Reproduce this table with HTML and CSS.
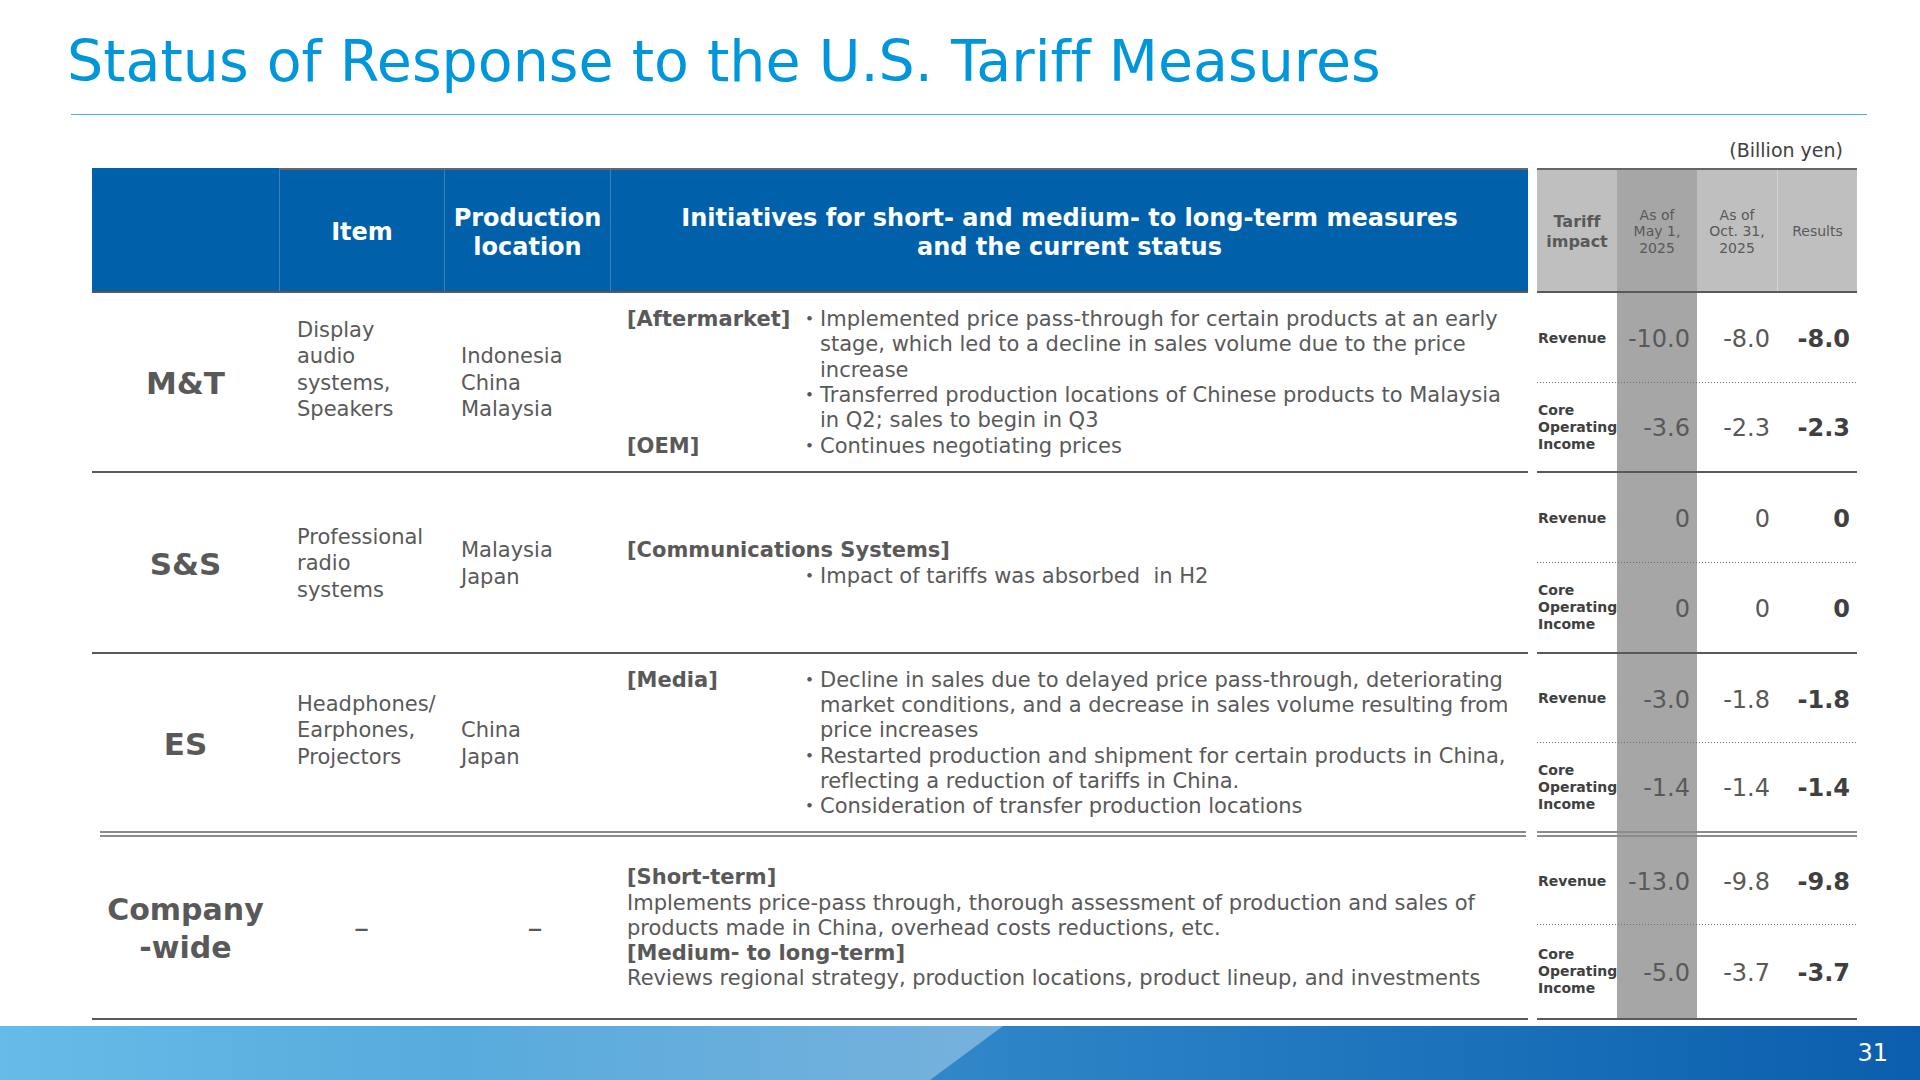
FILE: index.html
```html
<!DOCTYPE html>
<html lang="en">
<head>
<meta charset="utf-8">
<title>Status of Response to the U.S. Tariff Measures</title>
<link rel="stylesheet" href="styles.css">
</head>
<body>
<div class="slide">
  <h1 class="title">Status of Response to the U.S. Tariff Measures</h1>
  <div class="rule"></div>
  <div class="unit">(Billion yen)</div>

  <div class="tables">
    <div class="ltable">
      <div class="lrow lhead">
        <div class="c c-seg"></div>
        <div class="c c-item">Item</div>
        <div class="c c-loc">Production<br>location</div>
        <div class="c c-init">Initiatives for short- and medium- to long-term measures<br>and the current status</div>
      </div>

      <div class="lrow r-mt">
        <div class="c c-seg">M&amp;T</div>
        <div class="c c-item">Display<br>audio<br>systems,<br>Speakers<br>&nbsp;</div>
        <div class="c c-loc">Indonesia<br>China<br>Malaysia</div>
        <div class="c c-init">
          <div class="measures">
            <div class="lbl">[Aftermarket]</div>
            <div class="items">
              <div class="b"><span class="dot">・</span>Implemented price pass-through for certain products at an early<br>stage, which led to a decline in sales volume due to the price<br>increase</div>
              <div class="b"><span class="dot">・</span>Transferred production locations of Chinese products to Malaysia<br>in Q2; sales to begin in Q3</div>
            </div>
            <div class="lbl">[OEM]</div>
            <div class="items">
              <div class="b"><span class="dot">・</span>Continues negotiating prices</div>
            </div>
          </div>
        </div>
      </div>

      <div class="lrow r-ss">
        <div class="c c-seg">S&amp;S</div>
        <div class="c c-item">Professional<br>radio<br>systems</div>
        <div class="c c-loc">Malaysia<br>Japan</div>
        <div class="c c-init">
          <div class="measures">
            <div class="lbl span">[Communications Systems]</div>
            <div class="items col2">
              <div class="b"><span class="dot">・</span>Impact of tariffs was absorbed&nbsp; in H2</div>
            </div>
          </div>
        </div>
      </div>

      <div class="lrow r-es">
        <div class="c c-seg">ES</div>
        <div class="c c-item">Headphones/<br>Earphones,<br>Projectors<br>&nbsp;</div>
        <div class="c c-loc">China<br>Japan</div>
        <div class="c c-init">
          <div class="measures">
            <div class="lbl">[Media]</div>
            <div class="items">
              <div class="b"><span class="dot">・</span>Decline in sales due to delayed price pass-through, deteriorating<br>market conditions, and a decrease in sales volume resulting from<br>price increases</div>
              <div class="b"><span class="dot">・</span>Restarted production and shipment for certain products in China,<br>reflecting a reduction of tariffs in China.</div>
              <div class="b"><span class="dot">・</span>Consideration of transfer production locations</div>
            </div>
          </div>
        </div>
      </div>

      <div class="dbl dbl-left"></div>

      <div class="lrow r-cw">
        <div class="c c-seg">Company<br>-wide</div>
        <div class="c c-item c-dash">–</div>
        <div class="c c-loc c-dash">–</div>
        <div class="c c-init">
          <div class="plain">
            <div class="strong">[Short-term]</div>
            <div>Implements price-pass through, thorough assessment of production and sales of<br>products made in China, overhead costs reductions, etc.</div>
            <div class="strong">[Medium- to long-term]</div>
            <div>Reviews regional strategy, production locations, product lineup, and investments</div>
          </div>
        </div>
      </div>
    </div>

    <div class="rtable">
      <div class="rhead">
        <div class="h h-lab">Tariff<br>impact</div>
        <div class="h h-may">As of<br>May 1,<br>2025</div>
        <div class="h h-oct">As of<br>Oct. 31,<br>2025</div>
        <div class="h h-res">Results</div>
      </div>

      <div class="rgroup">
        <div class="rsub s-top h90">
          <div class="lab">Revenue</div><div class="v">-10.0</div><div class="v">-8.0</div><div class="v res">-8.0</div>
        </div>
        <div class="rsub s-bot h90">
          <div class="lab">Core<br>Operating<br>Income</div><div class="v">-3.6</div><div class="v">-2.3</div><div class="v res">-2.3</div>
        </div>
      </div>

      <div class="rgroup">
        <div class="rsub s-top h90">
          <div class="lab">Revenue</div><div class="v">0</div><div class="v">0</div><div class="v res">0</div>
        </div>
        <div class="rsub s-bot h91">
          <div class="lab">Core<br>Operating<br>Income</div><div class="v">0</div><div class="v">0</div><div class="v res">0</div>
        </div>
      </div>

      <div class="rgroup">
        <div class="rsub s-top h89">
          <div class="lab">Revenue</div><div class="v">-3.0</div><div class="v">-1.8</div><div class="v res">-1.8</div>
        </div>
        <div class="rsub h88">
          <div class="lab">Core<br>Operating<br>Income</div><div class="v">-1.4</div><div class="v">-1.4</div><div class="v res">-1.4</div>
        </div>
      </div>

      <div class="dbl dbl-right"></div>

      <div class="rgroup">
        <div class="rsub s-top h88">
          <div class="lab">Revenue</div><div class="v">-13.0</div><div class="v">-9.8</div><div class="v res">-9.8</div>
        </div>
        <div class="rsub s-bot h95">
          <div class="lab">Core<br>Operating<br>Income</div><div class="v">-5.0</div><div class="v">-3.7</div><div class="v res">-3.7</div>
        </div>
      </div>
    </div>
  </div>

  <footer class="footer"><span class="page">31</span></footer>
</div>
</body>
</html>
```

FILE: styles.css
```css
* { box-sizing: border-box; }
html, body { margin: 0; padding: 0; background: #fff; }
body {
  font-family: "DejaVu Sans", "Noto Sans CJK JP", sans-serif;
  font-variant-ligatures: none;
  color: #595959;
}
.slide {
  width: 1920px;
  height: 1080px;
  overflow: hidden;
  display: flex;
  flex-direction: column;
}

/* Title */
.title {
  margin: 0;
  padding: 27px 0 0 67px;
  height: 97px;
  font-size: 57px;
  line-height: 68px;
  font-weight: normal;
  color: #0096dc;
  white-space: nowrap;
}
.rule {
  margin: 17px 53px 0 71px;
  height: 1px;
  background: #45b0ea;
}
.unit {
  margin-top: 24px;
  padding-right: 77px;
  text-align: right;
  font-size: 19px;
  line-height: 22px;
  color: #404040;
}

/* Tables area */
.tables {
  margin-top: 7px;
  padding-left: 92px;
  display: flex;
  gap: 9px;
  height: 852px;
}

/* Left table */
.ltable { width: 1436px; display: flex; flex-direction: column; }
.lrow {
  display: grid;
  grid-template-columns: 187px 165px 166px 918px;
}
.lhead { height: 125px; border-bottom: 2px solid #595959; }
.r-mt { height: 180px; border-bottom: 2px solid #595959; }
.r-ss { height: 181px; border-bottom: 2px solid #595959; }
.r-es { height: 177px; }
.r-cw { height: 183px; border-bottom: 2px solid #595959; }

.c {
  display: flex;
  flex-direction: column;
  justify-content: center;
  font-size: 21px;
  line-height: 26.5px;
  white-space: nowrap;
}
.lrow:not(.lhead) .c { padding-top: 2px; }
.lhead .c {
  background: #0061aa;
  color: #fff;
  font-weight: bold;
  font-size: 24px;
  line-height: 29px;
  text-align: center;
  align-items: center;
  padding-top: 4px;
}
.lhead .c-item, .lhead .c-loc, .lhead .c-init {
  border-top: 2px solid #666;
  border-left: 1px solid #3f7fbd;
}
.c-seg {
  align-items: center;
  text-align: center;
  font-weight: bold;
  font-size: 31px;
  line-height: 38px;
}
.r-cw .c-seg { font-size: 30px; }
.lrow:not(.lhead) .c-item { padding-left: 18px; }
.lrow:not(.lhead) .c-loc { padding-left: 17px; }
.lrow:not(.lhead) .c-init { padding-left: 17px; }
.c-dash { align-items: center; font-size: 30px; }
.r-cw .c-item.c-dash { padding-left: 0; }
.r-cw .c-loc.c-dash { padding-left: 16px; }

.measures {
  display: grid;
  grid-template-columns: 172px 1fr;
  font-size: 21px;
  line-height: 25.3px;
}
.lbl { font-weight: bold; }
.lbl.span { grid-column: 1 / -1; }
.items.col2 { grid-column: 2; }
.b {
  padding-left: 21px;
  text-indent: -21px;
}
.dot {
  display: inline-block;
  width: 21px;
  text-indent: 0;
  text-align: center;
  font-family: "Noto Sans CJK JP", sans-serif;
  line-height: 1;
}
.plain {
  font-size: 21px;
  line-height: 25.3px;
}
.strong { font-weight: bold; }

.dbl {
  height: 6px;
  border-top: 2px solid #8c8c8c;
  border-bottom: 2px solid #8c8c8c;
}
.dbl-left { margin-left: 8px; margin-right: 2px; }

/* Right table */
.rtable {
  width: 320px;
  display: flex;
  flex-direction: column;
  background: linear-gradient(to right, transparent 80px, #a6a6a6 80px, #a6a6a6 160px, transparent 160px);
}
.rhead {
  height: 125px;
  display: grid;
  grid-template-columns: 80px 80px 80px 80px;
  border-top: 2px solid #666;
  border-bottom: 2px solid #595959;
}
.h {
  display: flex;
  flex-direction: column;
  justify-content: center;
  align-items: center;
  text-align: center;
  background: #bfbfbf;
  font-size: 14px;
  line-height: 16.5px;
  color: #595959;
  white-space: nowrap;
  padding-top: 2px;
}
.h-lab { font-weight: bold; font-size: 16px; line-height: 20px; }
.h-may { background: #a6a6a6; }
.h-res { border-left: 1px solid #d4d4d4; }

.rsub {
  display: grid;
  grid-template-columns: 80px 80px 80px 80px;
  align-items: center;
}
.h88 { height: 88px; }
.h89 { height: 89px; }
.h90 { height: 90px; }
.h91 { height: 91px; }
.h95 { height: 95px; }
.s-top {
  background-image: linear-gradient(to right, #6f6f6f 1px, transparent 1px);
  background-size: 3px 1px;
  background-repeat: repeat-x;
  background-position: left bottom;
}
.s-bot { border-bottom: 2px solid #595959; }
.lab {
  padding-left: 1px;
  font-weight: bold;
  font-size: 14px;
  line-height: 17px;
  color: #404040;
  white-space: nowrap;
  position: relative;
  z-index: 1;
}
.v {
  text-align: right;
  padding-right: 7px;
  padding-top: 2px;
  font-size: 24px;
  line-height: 30px;
  color: #595959;
}
.v.res { font-weight: bold; color: #404040; }

/* Footer */
.footer {
  margin-top: 6px;
  height: 54px;
  position: relative;
  display: flex;
  justify-content: flex-end;
  align-items: center;
  padding-right: 32px;
  background: linear-gradient(90deg, #3b93d0 0, #3088c9 930px, #0a5ead 1920px);
}
.footer::before {
  content: "";
  position: absolute;
  inset: 0;
  clip-path: polygon(0 0, 1003px 0, 930px 100%, 0 100%);
  background: linear-gradient(90deg, #66bbe8 0, #57abdd 450px, #77b1dc 1000px);
}
.page {
  position: relative;
  color: #fff;
  font-size: 24px;
  line-height: 30px;
}
```
